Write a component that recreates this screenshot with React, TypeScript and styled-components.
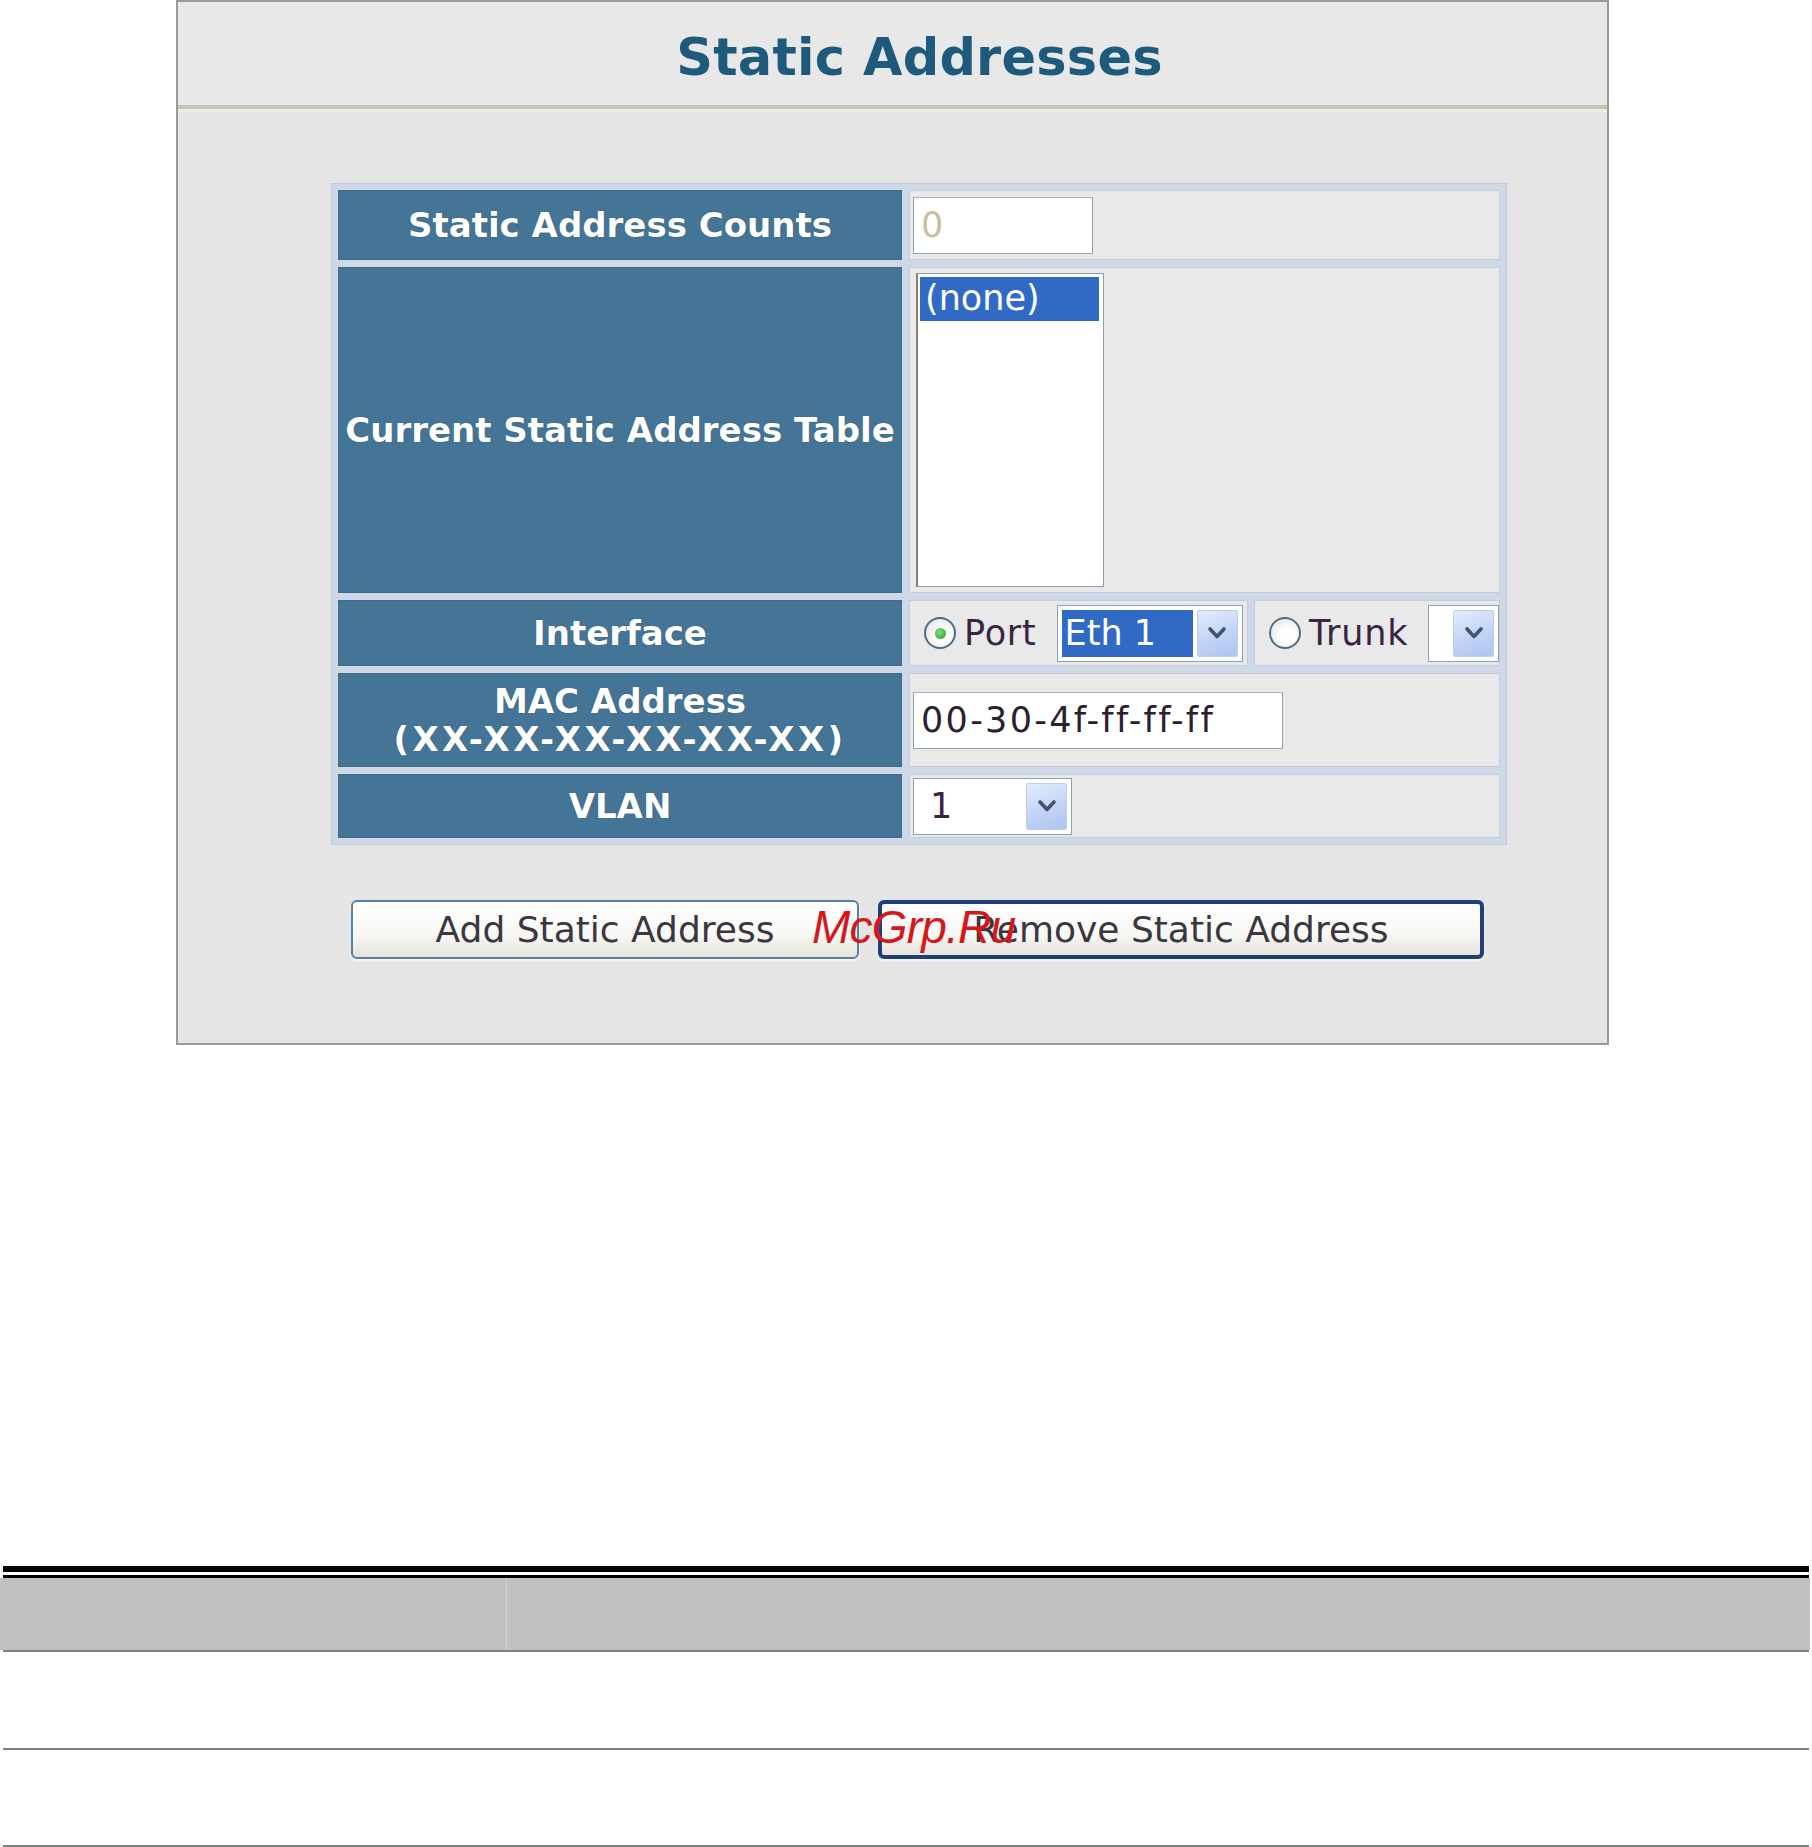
import React from "react";
import styled, { createGlobalStyle, css } from "styled-components";

const GlobalStyle = createGlobalStyle`
  html, body { margin: 0; padding: 0; background: #ffffff; }
  body { font-family: "DejaVu Sans", Verdana, sans-serif; }
  * { box-sizing: border-box; }
`;

const Page = styled.div`
  width: 1812px;
  height: 1847px;
  display: flex;
  flex-direction: column;
  overflow: hidden;
`;

/* ---------- configuration panel ---------- */

const Panel = styled.section`
  margin-left: 176px;
  width: 1433px;
  height: 1045px;
  border: 2px solid #9a9a9a;
  background: #e5e5e5;
  display: flex;
  flex-direction: column;
`;

const PanelHeader = styled.header`
  height: 107px;
  background: #e8e8e8;
  border-bottom: 4px solid #c6c4b4;
  box-shadow: 0 3px 0 #eeebdf;
  display: flex;
  align-items: center;
  justify-content: center;
  padding: 8px 0 0 54px;
`;

const Title = styled.h1`
  margin: 0;
  font-family: "DejaVu Sans", Verdana, sans-serif;
  font-size: 51px;
  font-weight: bold;
  color: #1d5a7c;
  letter-spacing: 0.2px;
`;

const FormGrid = styled.div`
  margin: 74px 0 0 153px;
  width: 1176px;
  display: grid;
  grid-template-columns: 564px 591px;
  grid-template-rows: 70px 326px 66px 94px 64px;
  gap: 7px;
  padding: 6px;
  border: 1px solid #c0cadb;
  background: #cfd8e6;
`;

const LabelCell = styled.div`
  background: #447596;
  border: 1px solid #3d6b8a;
  color: #ffffff;
  font-family: "DejaVu Sans", Verdana, sans-serif;
  font-weight: bold;
  font-size: 34px;
  line-height: 1.12;
  text-align: center;
  display: flex;
  flex-direction: column;
  align-items: center;
  justify-content: center;
  text-shadow: 0 0 1px rgba(20, 40, 60, 0.6);
  white-space: nowrap;
`;

const LabelHint = styled.span`
  letter-spacing: 3.4px;
`;

const ValueCell = styled.div<{ $tall?: boolean }>`
  background: #e9e9e9;
  border: 1px solid #c4cddb;
  display: flex;
  align-items: center;
  padding-left: 3px;
  ${(p) =>
    p.$tall &&
    css`
      align-items: stretch;
      padding: 5px 0 5px 6px;
    `}
`;

const SplitCell = styled.div`
  display: flex;
  gap: 6px;
`;

const SubCell = styled.div<{ $w: number }>`
  width: ${(p) => p.$w}px;
  background: #e9e9e9;
  border: 1px solid #c4cddb;
  display: flex;
  align-items: center;
  padding-left: 14px;
`;

const controlFont = css`
  font-family: "DejaVu Sans", Tahoma, sans-serif;
  font-size: 35px;
`;

const Field = styled.input<{ $w: number; $muted?: boolean; $spaced?: boolean }>`
  ${controlFont};
  width: ${(p) => p.$w}px;
  height: 57px;
  padding: 0 0 0 7px;
  border: 1px solid #8ea0b6;
  border-top-color: #a7b4c6;
  background: #ffffff;
  color: ${(p) => (p.$muted ? "#cbbd9f" : "#2c2030")};
  letter-spacing: ${(p) => (p.$spaced ? "2.3px" : "0")};
  outline: none;
`;

const ListBox = styled.div`
  width: 188px;
  background: #ffffff;
  border: 1px solid #8d9db2;
  border-left: 2px solid #8a7f70;
  padding: 3px 4px 0 2px;
  display: flex;
  flex-direction: column;
`;

const ListOption = styled.div<{ $selected?: boolean }>`
  ${controlFont};
  height: 44px;
  line-height: 42px;
  padding-left: 5px;
  color: ${(p) => (p.$selected ? "#ffffff" : "#222")};
  background: ${(p) => (p.$selected ? "#316ac5" : "transparent")};
`;

const RadioLabel = styled.label`
  ${controlFont};
  display: flex;
  align-items: center;
  gap: 8px;
  color: #3a2442;
  margin-right: 20px;
  letter-spacing: 0.8px;
`;

const RadioDot = styled.span<{ $checked?: boolean }>`
  width: 32px;
  height: 32px;
  border-radius: 50%;
  border: 2px solid #4f6c86;
  background: radial-gradient(circle at 60% 60%, #ffffff 30%, #dcdcd6 100%);
  display: inline-flex;
  align-items: center;
  justify-content: center;
  &::after {
    content: "";
    width: 11px;
    height: 11px;
    border-radius: 50%;
    background: ${(p) =>
      p.$checked ? "radial-gradient(circle at 40% 40%, #7fe07f, #1f9a1f)" : "transparent"};
  }
`;

const SelectBox = styled.div<{ $w: number }>`
  width: ${(p) => p.$w}px;
  height: 57px;
  background: #ffffff;
  border: 1px solid #8ea0b6;
  padding: 4px;
  display: flex;
  align-items: stretch;
  gap: 4px;
`;

const SelectValue = styled.span<{ $highlight?: boolean }>`
  ${controlFont};
  flex: 1;
  display: flex;
  align-items: center;
  padding-left: ${(p) => (p.$highlight ? "3px" : "12px")};
  color: ${(p) => (p.$highlight ? "#ffffff" : "#3a2442")};
  background: ${(p) => (p.$highlight ? "#316ac5" : "transparent")};
`;

const ArrowButton = styled.span`
  width: 41px;
  border: 1px solid #bccdee;
  border-radius: 2px;
  background: linear-gradient(160deg, #e3ecfd 0%, #c2d4f6 55%, #adc4f1 100%);
  display: flex;
  align-items: center;
  justify-content: center;
`;

const Chevron = () => (
  <svg width="20" height="14" viewBox="0 0 20 14">
    <path d="M3 3 L10 10.5 L17 3" fill="none" stroke="#46526c" strokeWidth="3.6" strokeLinecap="round" strokeLinejoin="round" />
  </svg>
);

const Select = ({ w, value, highlight }: { w: number; value: string; highlight?: boolean }) => (
  <SelectBox $w={w}>
    <SelectValue $highlight={highlight}>{value}</SelectValue>
    <ArrowButton>
      <Chevron />
    </ArrowButton>
  </SelectBox>
);

/* ---------- action buttons ---------- */

const ButtonRow = styled.div`
  position: relative;
  margin: 55px 0 0 173px;
  display: flex;
  gap: 19px;
`;

const ActionButton = styled.button<{ $w: number; $default?: boolean }>`
  ${controlFont};
  font-size: 36px;
  width: ${(p) => p.$w}px;
  height: 59px;
  padding: 0;
  color: #3b3640;
  background: linear-gradient(180deg, #ffffff 0%, #f7f7f4 60%, #e6e3da 100%);
  border: ${(p) => (p.$default ? "4px solid #1f3f7a" : "2px solid #5a7fa6")};
  border-radius: 6px;
  box-shadow: 0 2px 3px rgba(255, 255, 255, 0.8);
`;

const Watermark = styled.span`
  position: absolute;
  left: 461px;
  top: 4px;
  font-family: "Liberation Sans", Arial, sans-serif;
  font-style: italic;
  font-size: 46px;
  letter-spacing: -0.8px;
  line-height: 1;
  color: #d5161a;
  pointer-events: none;
`;

/* ---------- parameter table below ---------- */

const DocTable = styled.div`
  margin-top: 521px;
  display: flex;
  flex-direction: column;
`;

const Rule = styled.div<{ $h: number; $color: string; $gapBelow?: number }>`
  height: ${(p) => p.$h}px;
  margin: 0 3px ${(p) => p.$gapBelow ?? 0}px 3px;
  background: ${(p) => p.$color};
`;

const DocHeaderRow = styled.div`
  height: 72px;
  width: 1810px;
  background: #c0c0c0;
  display: grid;
  grid-template-columns: 506px 1fr;
`;

const DocHeaderCell = styled.div<{ $divider?: boolean }>`
  border-left: ${(p) => (p.$divider ? "1px solid #d2d2d2" : "none")};
`;

const DocRow = styled.div<{ $h: number }>`
  height: ${(p) => p.$h}px;
  background: #ffffff;
`;

export default function App() {
  return (
    <Page>
      <GlobalStyle />
      <Panel>
        <PanelHeader>
          <Title>Static Addresses</Title>
        </PanelHeader>

        <FormGrid>
          <LabelCell>Static Address Counts</LabelCell>
          <ValueCell>
            <Field $w={180} $muted value="0" readOnly />
          </ValueCell>

          <LabelCell>Current Static Address Table</LabelCell>
          <ValueCell $tall>
            <ListBox role="listbox">
              <ListOption $selected>(none)</ListOption>
            </ListBox>
          </ValueCell>

          <LabelCell>Interface</LabelCell>
          <SplitCell>
            <SubCell $w={339}>
              <RadioLabel>
                <RadioDot $checked />
                Port
              </RadioLabel>
              <Select w={186} value="Eth 1" highlight />
            </SubCell>
            <SubCell $w={246}>
              <RadioLabel>
                <RadioDot />
                Trunk
              </RadioLabel>
              <Select w={71} value="" />
            </SubCell>
          </SplitCell>

          <LabelCell>
            <span>MAC Address</span>
            <LabelHint>(XX-XX-XX-XX-XX-XX)</LabelHint>
          </LabelCell>
          <ValueCell>
            <Field $w={370} $spaced value="00-30-4f-ff-ff-ff" readOnly />
          </ValueCell>

          <LabelCell>VLAN</LabelCell>
          <ValueCell>
            <Select w={159} value="1" />
          </ValueCell>
        </FormGrid>

        <ButtonRow>
          <ActionButton $w={508}>Add Static Address</ActionButton>
          <ActionButton $w={606} $default>
            Remove Static Address
          </ActionButton>
          <Watermark>McGrp.Ru</Watermark>
        </ButtonRow>
      </Panel>

      <DocTable>
        <Rule $h={6} $color="#000" $gapBelow={3} />
        <Rule $h={3} $color="#000" />
        <DocHeaderRow>
          <DocHeaderCell />
          <DocHeaderCell $divider />
        </DocHeaderRow>
        <Rule $h={2} $color="#808080" />
        <DocRow $h={96} />
        <Rule $h={2} $color="#808080" />
        <DocRow $h={95} />
        <Rule $h={2} $color="#808080" />
      </DocTable>
    </Page>
  );
}
